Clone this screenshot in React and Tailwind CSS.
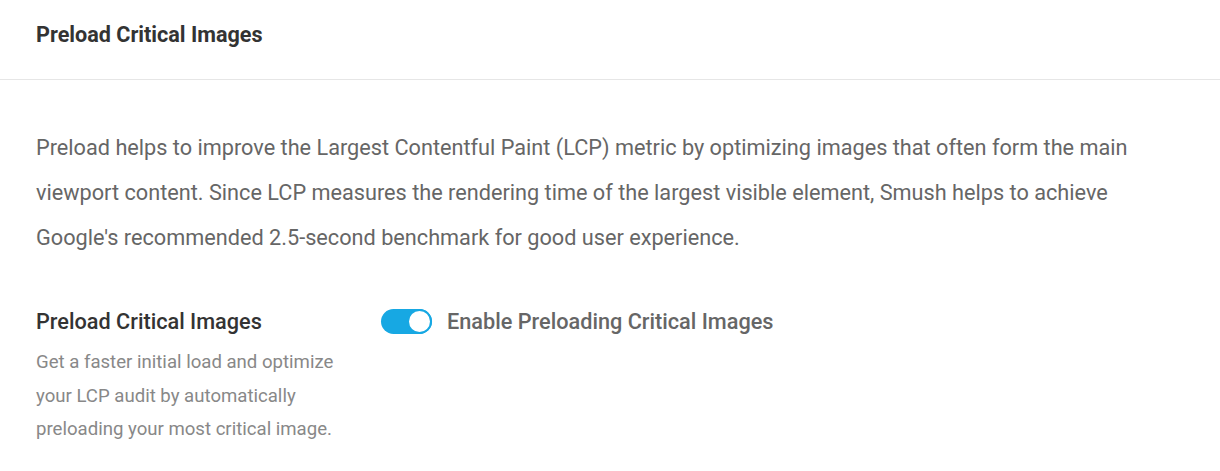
export default function App() {
  return (
    <div className="w-[1220px] h-[471px] bg-white overflow-hidden" style={{ fontFamily: "Roboto, 'Liberation Sans', sans-serif" }}>
      <div className="h-[80px] border-b border-[#e6e6e6] px-[36px] flex items-center">
        <h3 className="text-[21.6px] font-bold text-[#333] leading-[30px] pb-[10px]">Preload Critical Images</h3>
      </div>
      <div className="px-[36px] pt-[45px]">
        <p className="text-[21.7px] leading-[45px] text-[#666]">
          Preload helps to improve the Largest Contentful Paint (LCP) metric by optimizing images that often form the main viewport content. Since LCP measures the rendering time of the largest visible element, Smush helps to achieve Google's recommended 2.5-second benchmark for good user experience.
        </p>
        <div className="flex mt-[47px]">
          <div className="w-[345px] shrink-0">
            <div className="text-[21.7px] leading-[30px] font-medium text-[#333]">Preload Critical Images</div>
            <div className="w-[315px] text-[18.6px] leading-[33.5px] text-[#888] mt-[9px]">
              Get a faster initial load and optimize your LCP audit by automatically preloading your most critical image.
            </div>
          </div>
          <div className="flex items-start gap-[15px]">
            <div className="relative w-[51px] h-[25px] rounded-full bg-[#17a8e3] mt-[2px]">
              <div className="absolute right-0 top-0 w-[25px] h-[25px] rounded-full bg-white border-[2px] border-[#17a8e3]"></div>
            </div>
            <span className="text-[21.7px] leading-[30px] font-medium text-[#666]">Enable Preloading Critical Images</span>
          </div>
        </div>
      </div>
    </div>
  );
}
